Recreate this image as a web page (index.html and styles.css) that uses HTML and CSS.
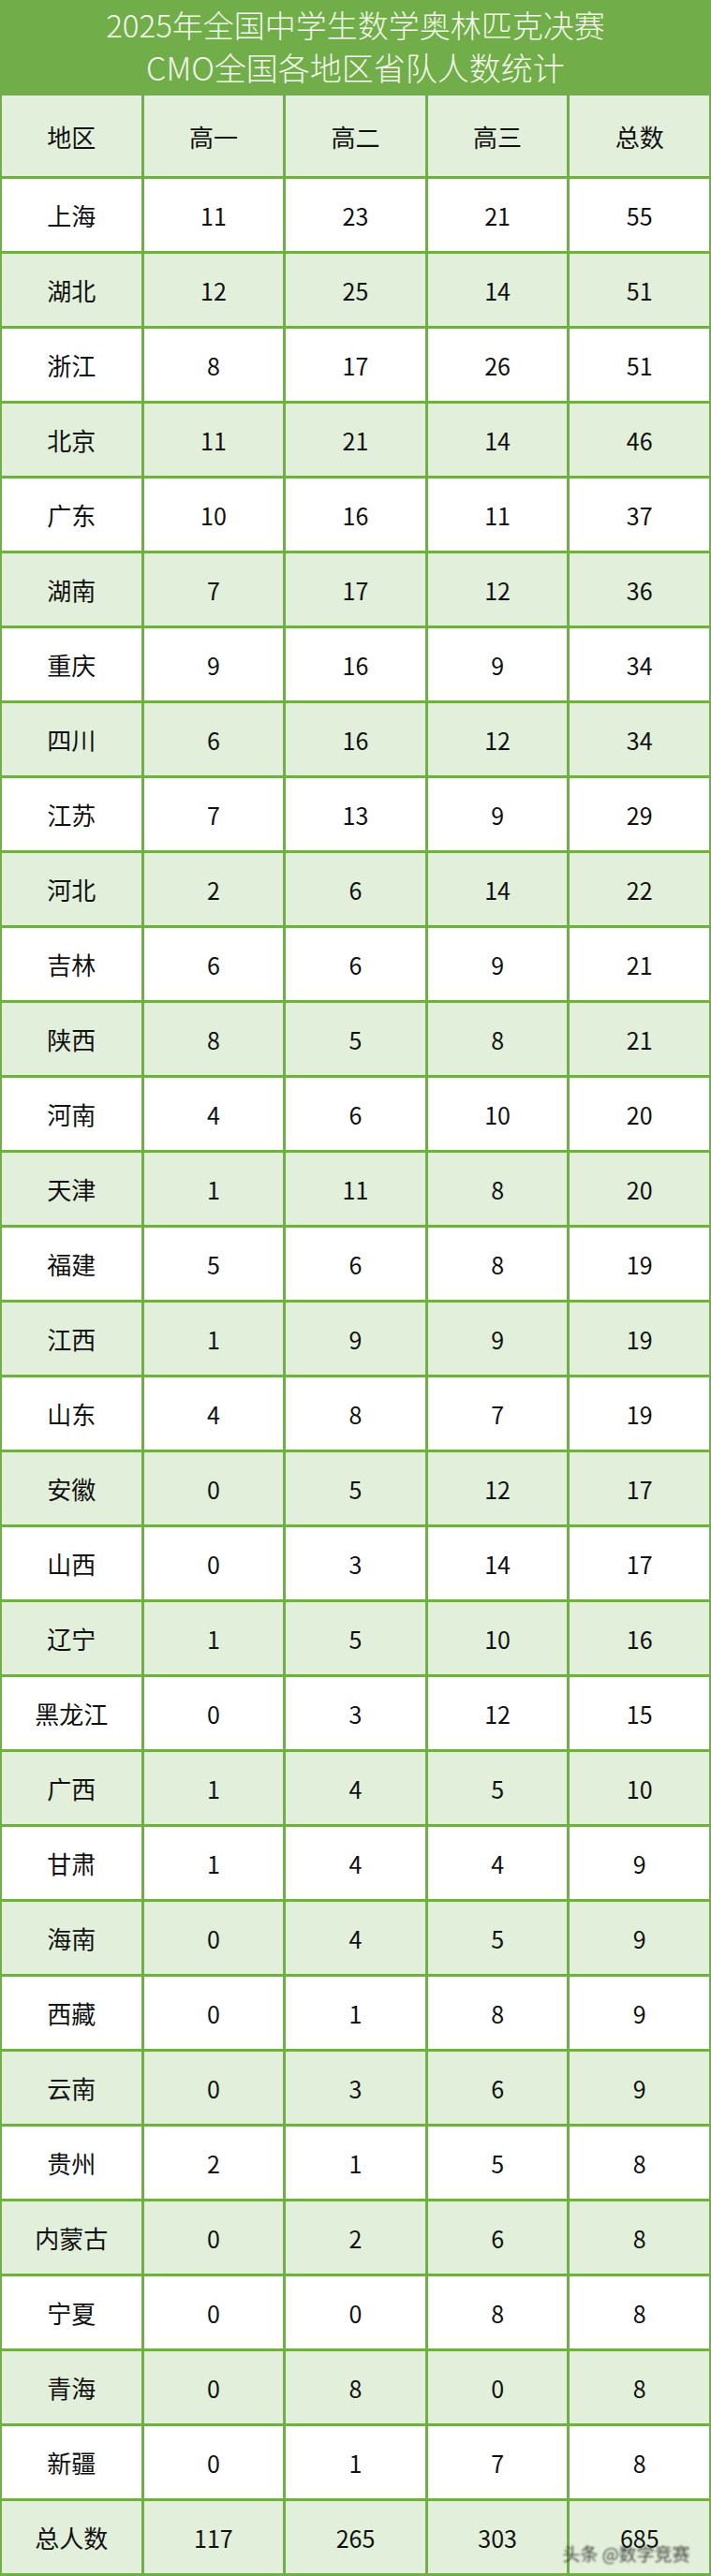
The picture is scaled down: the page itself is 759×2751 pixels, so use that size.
FILE: index.html
```html
<!DOCTYPE html>
<html lang="zh-CN">
<head>
<meta charset="utf-8">
<title>2025年全国中学生数学奥林匹克决赛 CMO全国各地区省队人数统计</title>
<link rel="stylesheet" href="styles.css">
</head>
<body>
<div class="sheet">
  <header class="title">
    <div class="t1">2025年全国中学生数学奥林匹克决赛</div>
    <div class="t2">CMO全国各地区省队人数统计</div>
  </header>
  <div class="table">
    <div class="row head"><div class="c">地区</div><div class="c">高一</div><div class="c">高二</div><div class="c">高三</div><div class="c">总数</div></div>
    <div class="row"><div class="c">上海</div><div class="c">11</div><div class="c">23</div><div class="c">21</div><div class="c">55</div></div>
    <div class="row alt"><div class="c">湖北</div><div class="c">12</div><div class="c">25</div><div class="c">14</div><div class="c">51</div></div>
    <div class="row"><div class="c">浙江</div><div class="c">8</div><div class="c">17</div><div class="c">26</div><div class="c">51</div></div>
    <div class="row alt"><div class="c">北京</div><div class="c">11</div><div class="c">21</div><div class="c">14</div><div class="c">46</div></div>
    <div class="row"><div class="c">广东</div><div class="c">10</div><div class="c">16</div><div class="c">11</div><div class="c">37</div></div>
    <div class="row alt"><div class="c">湖南</div><div class="c">7</div><div class="c">17</div><div class="c">12</div><div class="c">36</div></div>
    <div class="row"><div class="c">重庆</div><div class="c">9</div><div class="c">16</div><div class="c">9</div><div class="c">34</div></div>
    <div class="row alt"><div class="c">四川</div><div class="c">6</div><div class="c">16</div><div class="c">12</div><div class="c">34</div></div>
    <div class="row"><div class="c">江苏</div><div class="c">7</div><div class="c">13</div><div class="c">9</div><div class="c">29</div></div>
    <div class="row alt"><div class="c">河北</div><div class="c">2</div><div class="c">6</div><div class="c">14</div><div class="c">22</div></div>
    <div class="row"><div class="c">吉林</div><div class="c">6</div><div class="c">6</div><div class="c">9</div><div class="c">21</div></div>
    <div class="row alt"><div class="c">陕西</div><div class="c">8</div><div class="c">5</div><div class="c">8</div><div class="c">21</div></div>
    <div class="row"><div class="c">河南</div><div class="c">4</div><div class="c">6</div><div class="c">10</div><div class="c">20</div></div>
    <div class="row alt"><div class="c">天津</div><div class="c">1</div><div class="c">11</div><div class="c">8</div><div class="c">20</div></div>
    <div class="row"><div class="c">福建</div><div class="c">5</div><div class="c">6</div><div class="c">8</div><div class="c">19</div></div>
    <div class="row alt"><div class="c">江西</div><div class="c">1</div><div class="c">9</div><div class="c">9</div><div class="c">19</div></div>
    <div class="row"><div class="c">山东</div><div class="c">4</div><div class="c">8</div><div class="c">7</div><div class="c">19</div></div>
    <div class="row alt"><div class="c">安徽</div><div class="c">0</div><div class="c">5</div><div class="c">12</div><div class="c">17</div></div>
    <div class="row"><div class="c">山西</div><div class="c">0</div><div class="c">3</div><div class="c">14</div><div class="c">17</div></div>
    <div class="row alt"><div class="c">辽宁</div><div class="c">1</div><div class="c">5</div><div class="c">10</div><div class="c">16</div></div>
    <div class="row"><div class="c">黑龙江</div><div class="c">0</div><div class="c">3</div><div class="c">12</div><div class="c">15</div></div>
    <div class="row alt"><div class="c">广西</div><div class="c">1</div><div class="c">4</div><div class="c">5</div><div class="c">10</div></div>
    <div class="row"><div class="c">甘肃</div><div class="c">1</div><div class="c">4</div><div class="c">4</div><div class="c">9</div></div>
    <div class="row alt"><div class="c">海南</div><div class="c">0</div><div class="c">4</div><div class="c">5</div><div class="c">9</div></div>
    <div class="row"><div class="c">西藏</div><div class="c">0</div><div class="c">1</div><div class="c">8</div><div class="c">9</div></div>
    <div class="row alt"><div class="c">云南</div><div class="c">0</div><div class="c">3</div><div class="c">6</div><div class="c">9</div></div>
    <div class="row"><div class="c">贵州</div><div class="c">2</div><div class="c">1</div><div class="c">5</div><div class="c">8</div></div>
    <div class="row alt"><div class="c">内蒙古</div><div class="c">0</div><div class="c">2</div><div class="c">6</div><div class="c">8</div></div>
    <div class="row"><div class="c">宁夏</div><div class="c">0</div><div class="c">0</div><div class="c">8</div><div class="c">8</div></div>
    <div class="row alt"><div class="c">青海</div><div class="c">0</div><div class="c">8</div><div class="c">0</div><div class="c">8</div></div>
    <div class="row"><div class="c">新疆</div><div class="c">0</div><div class="c">1</div><div class="c">7</div><div class="c">8</div></div>
    <div class="row alt"><div class="c">总人数</div><div class="c">117</div><div class="c">265</div><div class="c">303</div><div class="c mark">685<span class="wm" aria-hidden="true">头条 @数学竞赛</span></div></div>
  </div>
</div>
</body>
</html>
```
FILE: styles.css
```css
html, body {
  margin: 0;
  padding: 0;
  background: #ffffff;
}
.sheet {
  width: 759px;
  font-family: "Noto Sans CJK SC", "Noto Sans", sans-serif;
  color: #111111;
}
.title {
  height: 99px;
  background: #71ad48;
  color: #f4f8ec;
  display: flex;
  flex-direction: column;
  align-items: center;
  justify-content: center;
  font-weight: 300;
}
.t1 {
  font-size: 33px;
  line-height: 46px;
  margin-top: -2px;
}
.t2 {
  font-size: 34px;
  line-height: 46px;
}
.table {
  background: #71ad48;
  padding: 3px 2px 3px 2px;
  display: flex;
  flex-direction: column;
  gap: 3px;
}
.row {
  display: grid;
  grid-template-columns: repeat(5, 1fr);
  gap: 3px;
  height: 77px;
}
.row.head {
  height: 86px;
}
.c {
  background: #ffffff;
  display: flex;
  align-items: center;
  justify-content: center;
  font-size: 25px;
}
.row.alt .c,
.row.head .c {
  background: #e2efda;
}
.row .c:first-child,
.row.head .c {
  font-size: 26px;
}
.mark {
  position: relative;
}
.wm {
  position: absolute;
  left: -8px;
  top: 46px;
  font-size: 19px;
  line-height: 20px;
  color: #2a2a2a;
  white-space: nowrap;
  filter: blur(1.2px);
  opacity: 0.85;
}
```
